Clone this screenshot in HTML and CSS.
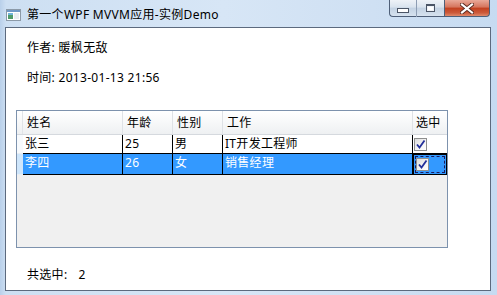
FILE: index.html
```html
<!DOCTYPE html>
<html lang="zh-CN">

<head>
    <meta charset="UTF-8">
    <title>第一个WPF MVVM应用-实例Demo</title>
    <link rel="stylesheet" href="styles.css">
</head>

<body>
    <div class="window">
        <div class="titlebar">
            <svg class="app-icon" width="15" height="12" viewBox="0 0 15 12">
                <rect x="0.5" y="0.5" width="14" height="11" fill="#ffffff" stroke="#8c9aa8" />
                <rect x="1" y="1" width="13" height="2" fill="#6f98c6" />
                <rect x="2" y="4" width="5" height="6" fill="#4f9a6a" />
                <rect x="2" y="4" width="5" height="2" fill="#6fb3d8" />
                <rect x="8" y="4" width="5" height="6" fill="#e9edf1" />
            </svg>
            <span class="title">第一个WPF MVVM应用-实例Demo</span>
            <div class="caption-buttons">
                <div class="cap cap-min"><span class="min-glyph"></span></div>
                <div class="cap cap-max"><span class="max-glyph"></span></div>
                <div class="cap cap-close">
                    <svg width="14" height="11" viewBox="0 0 14 11">
                        <path d="M2 1.5 L12 9.5 M12 1.5 L2 9.5" stroke="#5a2a20" stroke-width="4" stroke-linecap="square" />
                        <path d="M2 1.5 L12 9.5 M12 1.5 L2 9.5" stroke="#ffffff" stroke-width="2.2" stroke-linecap="square" />
                    </svg>
                </div>
            </div>
        </div>

        <div class="client">
            <p class="info">作者: 暖枫无敌</p>
            <p class="info info-time">时间: 2013-01-13 21:56</p>

            <div class="datagrid">
                <div class="row header-row">
                    <div class="rh"></div>
                    <div class="hc">姓名</div>
                    <div class="hc">年龄</div>
                    <div class="hc">性别</div>
                    <div class="hc">工作</div>
                    <div class="hc hc-last">选中</div>
                </div>
                <div class="row data-row">
                    <div class="rh"></div>
                    <div class="cell">张三</div>
                    <div class="cell">25</div>
                    <div class="cell">男</div>
                    <div class="cell">IT开发工程师</div>
                    <div class="cell cell-check"><span class="checkbox">
                            <svg width="11" height="11" viewBox="0 0 11 11">
                                <path d="M2 5.5 L4.5 8.5 L9.5 1.5" fill="none" stroke="#23309a" stroke-width="1.8" />
                            </svg></span></div>
                </div>
                <div class="row data-row selected">
                    <div class="rh"></div>
                    <div class="cell">李四</div>
                    <div class="cell">26</div>
                    <div class="cell">女</div>
                    <div class="cell">销售经理</div>
                    <div class="cell cell-check current"><span class="focus"><span class="checkbox">
                            <svg width="11" height="11" viewBox="0 0 11 11">
                                <path d="M2 5.5 L4.5 8.5 L9.5 1.5" fill="none" stroke="#23309a" stroke-width="1.8" />
                            </svg></span></span></div>
                </div>
            </div>

            <p class="total"><span>共选中:</span><span class="count">2</span></p>
        </div>
    </div>
</body>

</html>
```

FILE: styles.css
```css
body {
    margin: 0;
    font-family: "Noto Sans", "Noto Sans CJK SC", sans-serif;
    font-size: 12px;
    letter-spacing: 0.3px;
    color: #000000;
}

.window {
    width: 497px;
    height: 295px;
    background: linear-gradient(to right, #b9d0ea 0px, #cddff2 6px, #d7e6f6 45%, #cfe0f3 75%, #c6dbf1 100%);
    display: flex;
    flex-direction: column;
}

.titlebar {
    height: 27px;
    display: flex;
    align-items: center;
}

.app-icon {
    margin-left: 6px;
    margin-top: 2px;
}

.title {
    margin-left: 6px;
    margin-top: 2px;
    line-height: 16px;
}

.caption-buttons {
    margin-left: auto;
    margin-right: 7px;
    align-self: flex-start;
    display: flex;
}

.cap {
    height: 17px;
    display: flex;
    align-items: center;
    justify-content: center;
    border: 1px solid #4e5f78;
    border-top: none;
    box-sizing: border-box;
}

.cap-min {
    width: 28px;
    border-radius: 0 0 0 4px;
    border-right: 1px solid #8d9db3;
    background: linear-gradient(#eef2f7, #d9e3ee 45%, #c3d2e3 50%, #d6e2ef);
}

.cap-max {
    width: 27px;
    border-left: none;
    border-right: none;
    background: linear-gradient(#eef2f7, #d9e3ee 45%, #c3d2e3 50%, #d6e2ef);
}

.cap-close {
    width: 46px;
    border-radius: 0 0 4px 0;
    background: linear-gradient(#e9a999, #d5745c 45%, #c2401f 50%, #cc5a3a 80%, #e08a6c);
}

.min-glyph {
    width: 10px;
    height: 3px;
    margin-top: 5px;
    background: #ffffff;
    border: 1px solid #4b5566;
}

.max-glyph {
    width: 7px;
    height: 5px;
    background: #ffffff;
    border: 1px solid #4b5566;
    border-top-width: 2px;
    box-shadow: inset 0 0 0 1px #eef2f7;
}

.client {
    flex: 1;
    margin: 0 6px 4px 5px;
    background: #ffffff;
    border: 1px solid #5c6a7e;
    display: flex;
    flex-direction: column;
}

.info {
    margin: 12px 0 0 21px;
    line-height: 16px;
}

.info-time {
    margin-top: 14px;
}

.datagrid {
    margin: 24px 0 0 10px;
    width: 432px;
    height: 138px;
    box-sizing: border-box;
    border: 1px solid #7d92ad;
    background: #f0f0f0;
}

.row {
    display: grid;
    grid-template-columns: 6px 100px 50px 50px 190px 34px;
}

.header-row {
    height: 24px;
    background: linear-gradient(#ffffff, #f7f8f9 50%, #eef0f2);
    border-bottom: 1px solid #d5d9de;
    box-sizing: border-box;
}

.header-row .rh {
    border-right: 1px solid #e1e4e8;
}

.hc {
    padding-left: 4px;
    line-height: 23px;
    border-right: 1px solid #dfe2e6;
}

.hc-last {
    border-right: none;
    padding-left: 3px;
}

.data-row {
    height: 19px;
    background: #ffffff;
}

.data-row .rh {
    background: #f7fafd;
    border-bottom: 1px solid #e8eef4;
}

.cell {
    padding-left: 2px;
    line-height: 18px;
    border-right: 1px solid #000000;
    border-bottom: 1px solid #000000;
    white-space: nowrap;
}

.selected .cell {
    background: #3399ff;
    color: #ffffff;
}

.selected .rh {
    background: #cfe6fb;
}

.cell-check {
    padding-left: 1px;
    display: flex;
    align-items: center;
    border-right: none;
}

.checkbox {
    width: 13px;
    height: 13px;
    box-sizing: border-box;
    border: 1px solid #8e8f8f;
    background: linear-gradient(135deg, #dcdcdc, #f6f6f6 60%, #ffffff);
    display: flex;
    align-items: center;
    justify-content: center;
}

.current {
    border: 1px solid #000000;
    padding: 1px;
}

.focus {
    flex: 1;
    height: 15px;
    border: 1px dashed #1a1a5a;
    display: flex;
    align-items: center;
}

.total {
    margin: 19px 0 0 21px;
    line-height: 16px;
}

.count {
    margin-left: 11px;
}
```
